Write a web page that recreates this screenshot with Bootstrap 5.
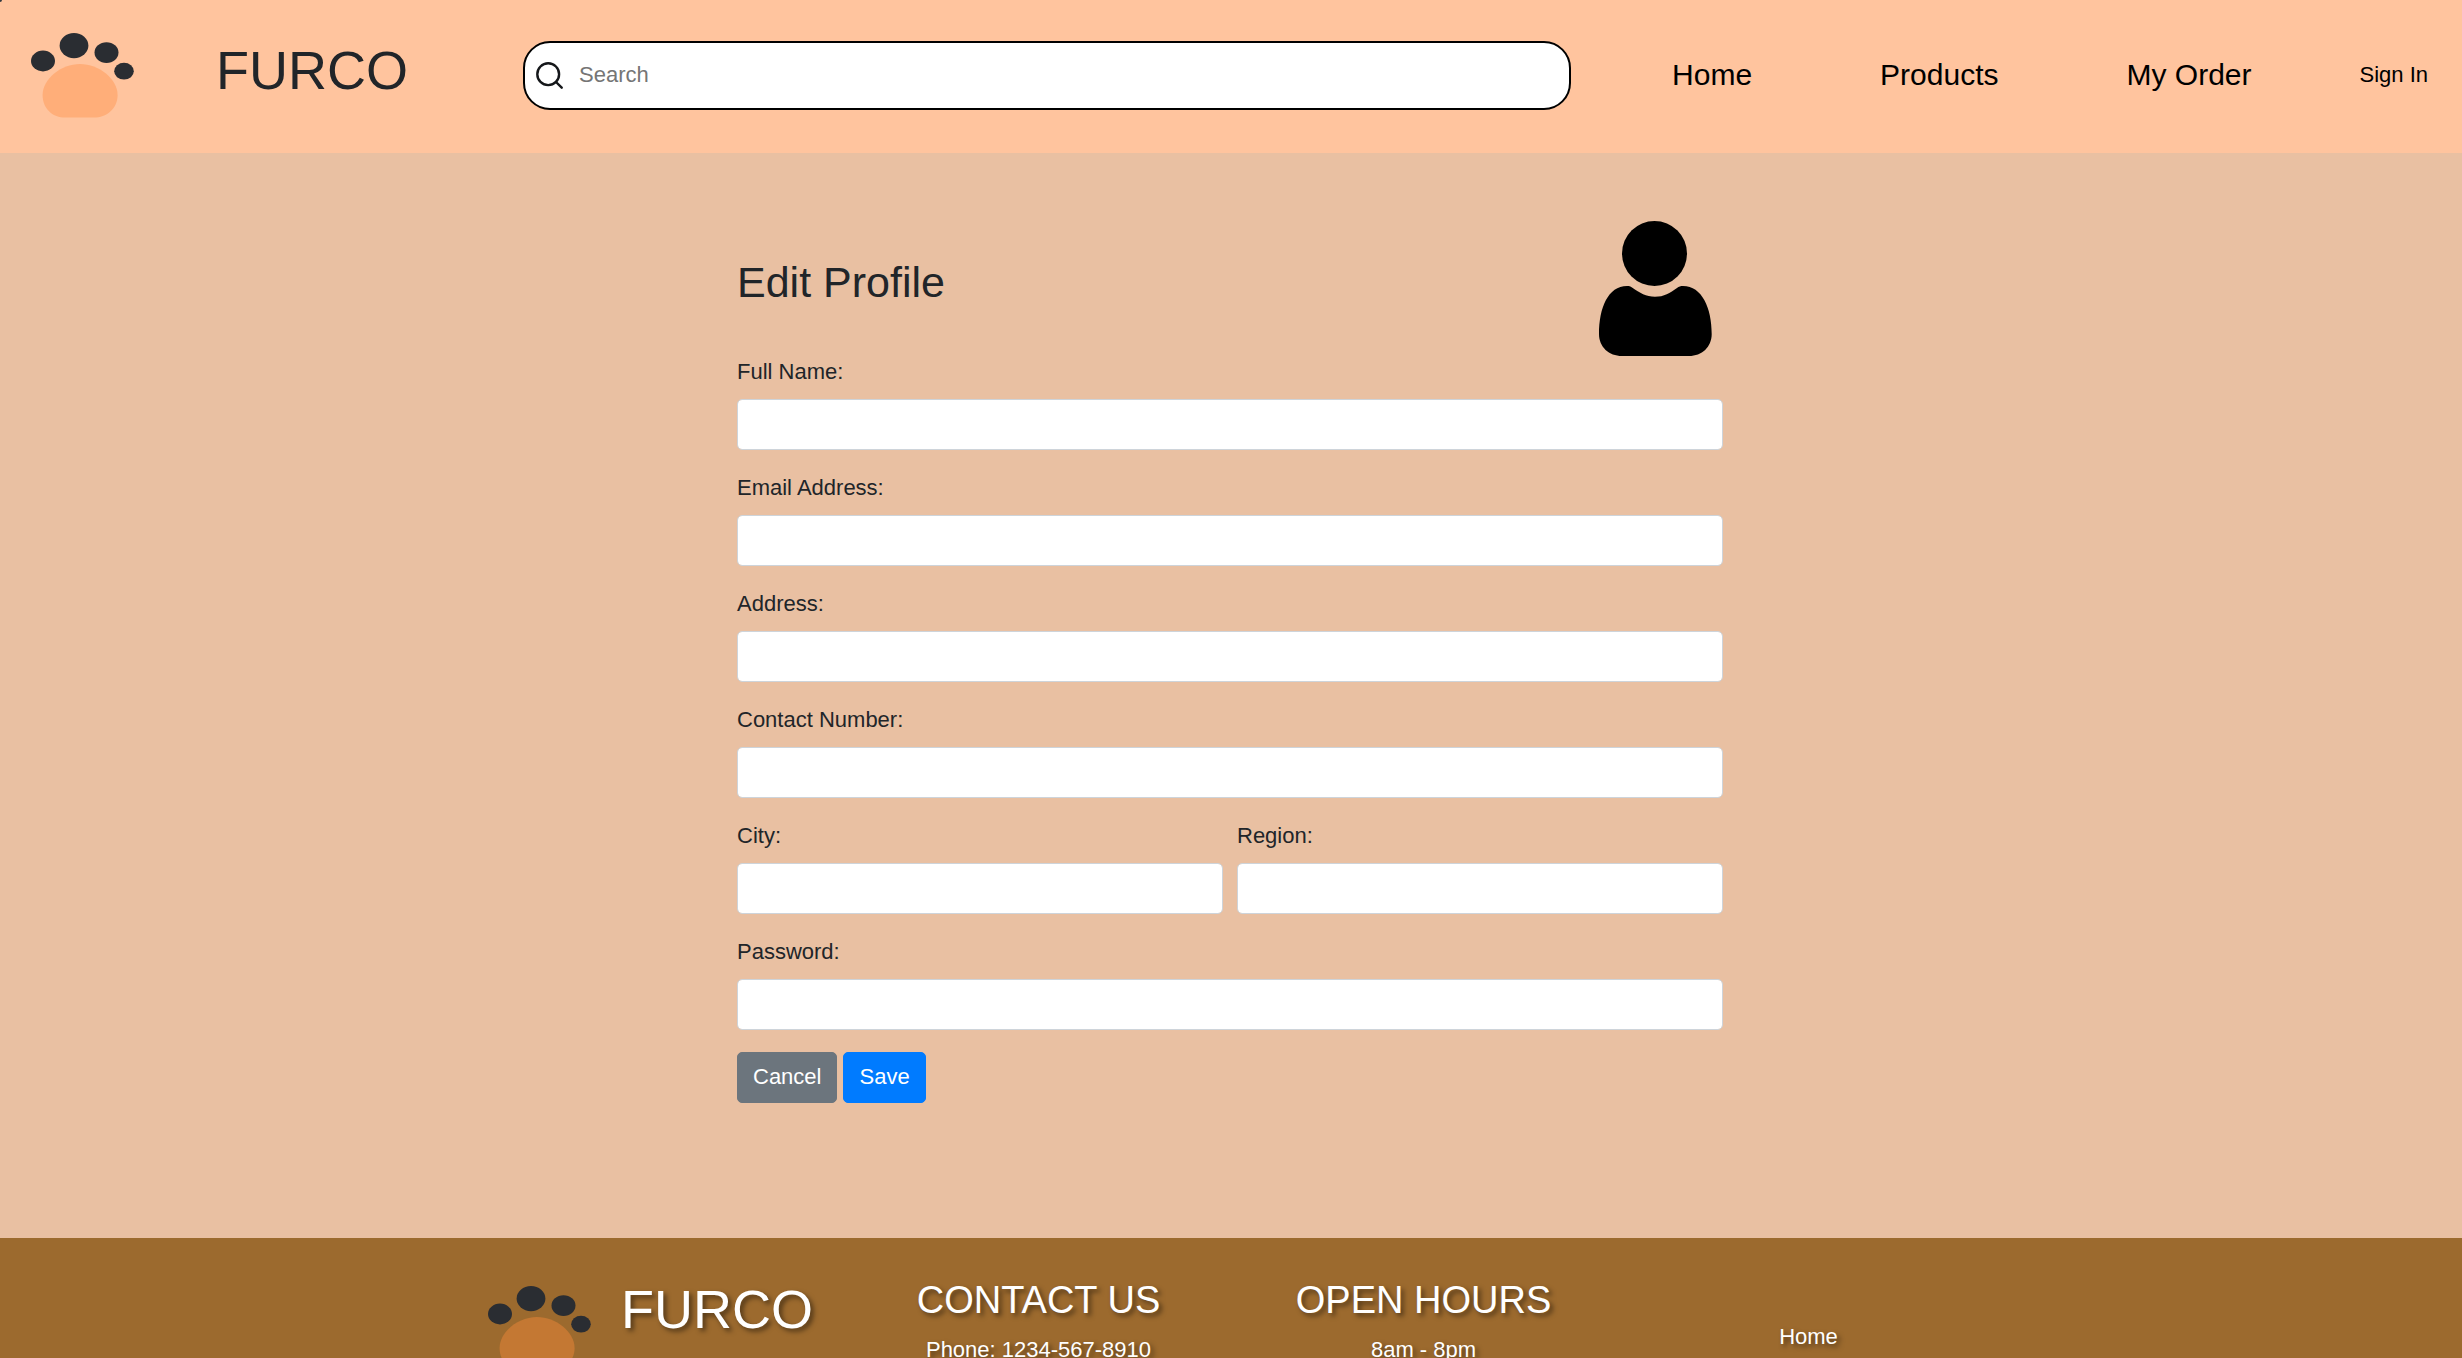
<!DOCTYPE html>
<html lang="en">
<head>
<meta charset="utf-8">
<meta name="viewport" content="width=device-width, initial-scale=1">
<title>Furco - Edit Profile</title>
<link href="https://cdn.jsdelivr.net/npm/bootstrap@5.3.0/dist/css/bootstrap.min.css" rel="stylesheet">
<style>
  body { font-family: "Liberation Sans", Arial, sans-serif; font-size: 22px; line-height: 32px; color: #212529; background: #e9c0a2; }
  a { text-decoration: none; }
  .site-header { background: #ffc49e; padding: 41px 34px 43px 31px; }
  .menu-dot { width: 2px; height: 2px; background: #343a40; border-bottom-right-radius: 2px; }
  .paw { width: 104px; height: 86px; flex: none; }
  .paw-light { color: #ffae79; }
  .paw-dark { color: #c47833; }
  .brand-name { font-size: 54px; line-height: 58px; }
  .site-header .paw { margin: -8px 81px -9px 0; }
  .site-header .brand-name { margin: 0 115px 11px 0; }
  .search-box { height: 69px; background: #fff; border: 2px solid #000; border-radius: 27px; padding: 0 11px; margin-right: 101px; }
  .search-box svg { width: 27px; height: 27px; }
  .search-box input { border: 0; outline: 0; background: none; margin-left: 16px; padding: 0 0 2px; }
  .search-box input::placeholder { color: #757575; }
  .main-nav { gap: 128px; margin-right: 108px; font-size: 30px; }
  .site-header a { color: #000; padding-bottom: 2px; }
  .page-grid { display: grid; grid-template-columns: 737fr 986fr 739fr; padding: 68px 0 135px; }
  .profile-form { grid-column: 2; }
  .profile-form h2 { font-size: 43px; line-height: 52px; margin-bottom: 14px; }
  .avatar { width: 113px; height: 135px; margin-right: 11px; }
  .field { margin-bottom: 22px; }
  .field label { display: block; margin-bottom: 11px; }
  .form-control { height: 51px; border-color: #ced4da; border-radius: 5px; font-size: 22px; }
  .pair { gap: 14px; }
  .actions { gap: 6px; }
  .actions .btn { height: 51px; font-size: 22px; line-height: 32px; padding: 0 15px 1px; border-radius: 5px; }
  .btn-primary { --bs-btn-bg: #007bff; --bs-btn-border-color: #007bff; }
  .site-footer { background: #9c6a2e; color: #fff; padding-top: 39px; text-shadow: 3px 3px 5px rgba(0,0,0,.5); }
  .site-footer a { color: #fff; }
  .footer-grid { max-width: 1540px; margin: 0 auto; }
  .footer-grid h3 { font-size: 38px; line-height: 46px; margin-bottom: 11px; }
  .footer-brand { gap: 29px; padding: 3px 0 0 27px; }
  .footer-brand .paw { margin-top: 6px; }
  .footer-links { padding-top: 44px; }
</style>
</head>
<body class="vh-100 overflow-hidden d-flex flex-column">
<svg class="d-none">
  <symbol id="paw-toes" viewBox="0 0 104 86">
    <g fill="#2a2d32">
      <ellipse cx="12" cy="28" rx="12" ry="10.4"/>
      <ellipse cx="43" cy="12.6" rx="14.4" ry="12.6"/>
      <ellipse cx="75.5" cy="19.6" rx="12" ry="10.4"/>
      <ellipse cx="93" cy="38.2" rx="9.8" ry="8.4"/>
    </g>
    <path fill="currentColor" d="M49 31C68 31 86.600 46 86.600 62C86.600 76 75 84.600 63 84.600H34C22 84.600 11.600 76 11.600 62C11.600 46 30 31 49 31Z"/>
  </symbol>
</svg>
<span class="menu-dot position-absolute top-0 start-0"></span>

<header class="site-header d-flex align-items-center">
  <svg class="paw paw-light" aria-hidden="true"><use href="#paw-toes"/></svg>
  <h1 class="brand-name">FURCO</h1>
  <form class="search-box d-flex align-items-center flex-grow-1" role="search">
    <svg viewBox="0 0 27 27" fill="none" stroke="#15171a" stroke-width="2.400" stroke-linecap="round" aria-hidden="true"><circle cx="12.200" cy="12.200" r="10.900"/><path d="M20 20L25.700 25.700"/></svg>
    <input class="flex-grow-1" type="search" placeholder="Search" aria-label="Search">
  </form>
  <nav class="main-nav d-flex">
    <a href="#">Home</a>
    <a href="#">Products</a>
    <a href="#">My Order</a>
  </nav>
  <a href="#">Sign In</a>
</header>

<main class="page-grid">
  <form class="profile-form">
    <div class="d-flex align-items-center justify-content-between">
      <h2>Edit Profile</h2>
      <svg class="avatar" viewBox="0 0 113 135" aria-hidden="true"><circle cx="55.500" cy="32.500" r="32.500"/><path d="M28 65C30 65 31.500 65.400 33 66.500C41 72 47 75.800 56 75.800C65 75.800 71 72 78 67C80 65.500 81.500 65 84 65C103 65 112.700 87 112.700 113C112.700 126 103 135 90 135H23C10 135 0 126 0 113C0 87 9 65 28 65Z"/></svg>
    </div>
    <div class="field"><label for="fullName">Full Name:</label><input class="form-control" id="fullName" type="text"></div>
    <div class="field"><label for="email">Email Address:</label><input class="form-control" id="email" type="email"></div>
    <div class="field"><label for="address">Address:</label><input class="form-control" id="address" type="text"></div>
    <div class="field"><label for="contact">Contact Number:</label><input class="form-control" id="contact" type="tel"></div>
    <div class="pair d-flex">
      <div class="field flex-fill"><label for="city">City:</label><input class="form-control" id="city" type="text"></div>
      <div class="field flex-fill"><label for="region">Region:</label><input class="form-control" id="region" type="text"></div>
    </div>
    <div class="field"><label for="password">Password:</label><input class="form-control" id="password" type="password"></div>
    <div class="actions d-flex">
      <button class="btn btn-secondary" type="button">Cancel</button>
      <button class="btn btn-primary" type="submit">Save</button>
    </div>
  </form>
</main>

<footer class="site-footer flex-grow-1 overflow-hidden">
  <div class="footer-grid row gx-0">
    <div class="col-3 footer-brand d-flex align-items-start">
      <svg class="paw paw-dark" aria-hidden="true"><use href="#paw-toes"/></svg>
      <h2 class="brand-name">FURCO</h2>
    </div>
    <div class="col-3 text-center"><h3>CONTACT US</h3><div>Phone: 1234-567-8910</div></div>
    <div class="col-3 text-center"><h3>OPEN HOURS</h3><div>8am - 8pm</div></div>
    <div class="col-3 text-center footer-links"><a href="#">Home</a></div>
  </div>
</footer>
<script src="https://cdn.jsdelivr.net/npm/bootstrap@5.3.0/dist/js/bootstrap.bundle.min.js"></script>
</body>
</html>
